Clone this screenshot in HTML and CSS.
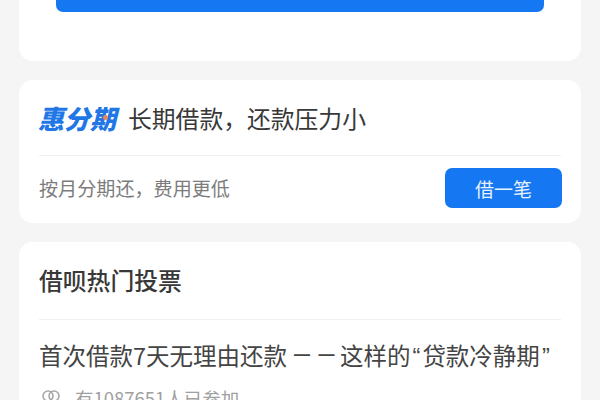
FILE: index.html
```html
<!DOCTYPE html>
<html lang="zh-CN">
<head>
    <meta charset="UTF-8">
    <title>借呗</title>
    <link rel="stylesheet" href="styles.css">
</head>
<body>
    <div class="card top-card">
        <div class="top-button"></div>
    </div>

    <div class="card loan-card">
        <div class="loan-head">
            <span class="logo">惠分期<i class="logo-dot"></i></span>
            <span class="loan-title">长期借款，还款压力小</span>
        </div>
        <div class="loan-foot">
            <span class="loan-sub">按月分期还，费用更低</span>
            <button class="borrow">借一笔</button>
        </div>
    </div>

    <div class="card vote-card">
        <div class="vote-head">借呗热门投票</div>
        <div class="vote-question">首次借款7天无理由还款<span class="dash">——</span>这样的<span class="quote">“</span>贷款冷静期<span class="quote">”</span></div>
        <div class="vote-meta">
            <svg class="people" width="20" height="20" viewBox="0 0 20 20" fill="none" stroke="#a8a8a8" stroke-width="1.6">
                <circle cx="7" cy="6" r="5"/>
                <circle cx="13" cy="6" r="5"/>
                <path d="M1 19c0-4 4-6 9-6s9 2 9 6"/>
            </svg>
            <span>有1087651人已参加</span>
        </div>
    </div>
</body>
</html>
```

FILE: styles.css
```css
html,
body {
    height: 400px;
    overflow: hidden;
}
body {
    margin: 0;
    padding: 0 19px;
    background-color: #f5f5f6;
    font-family: "Noto Sans CJK SC", "Liberation Sans", sans-serif;
    display: flex;
    flex-direction: column;
    gap: 19px;
}
.card {
    flex: none;
    background-color: #fff;
    border-radius: 14px;
    padding: 0 20px;
}
.top-card {
    height: 61px;
    border-radius: 0 0 14px 14px;
    padding: 0 37px;
}
.top-button {
    height: 12px;
    background-color: #1677f2;
    border-radius: 0 0 7px 7px;
}
.loan-card {
    height: 143px;
}
.loan-head {
    height: 75px;
    display: flex;
    align-items: center;
    gap: 12px;
    border-bottom: 1px solid #f0f0f0;
}
.logo {
    position: relative;
    margin-left: -1px;
    font-size: 26px;
    font-weight: 900;
    font-style: italic;
    color: #2277e6;
    width: 78px;
    white-space: nowrap;
}
.logo-dot {
    position: absolute;
    left: 65px;
    top: 16px;
    width: 5px;
    height: 5px;
    border-radius: 50%;
    background-color: #e8875a;
}
.loan-title {
    font-size: 23.800px;
    color: #383838;
}
.loan-foot {
    display: flex;
    align-items: center;
    justify-content: space-between;
    margin-top: 12px;
    margin-right: -1px;
}
.loan-sub {
    font-size: 19.100px;
    color: #7c7c7c;
}
.borrow {
    width: 117px;
    height: 40px;
    border: none;
    border-radius: 7px;
    background-color: #1677f2;
    color: #e8f2ff;
    font-family: inherit;
    font-size: 19px;
    padding: 0;
}
.vote-card {
    height: 200px;
}
.vote-head {
    height: 77px;
    line-height: 75px;
    font-size: 23.800px;
    font-weight: 500;
    color: #383838;
    border-bottom: 1px solid #f0f0f0;
}
.vote-question {
    margin-top: 17px;
    font-size: 23.500px;
    line-height: 36px;
    color: #444;
    white-space: nowrap;
}
.dash {
    font-family: "Liberation Sans", sans-serif;
    font-size: 16px;
    font-weight: 700;
    letter-spacing: 8.500px;
    vertical-align: 5px;
    margin-left: 7px;
    margin-right: -3px;
}
.quote {
    font-family: "Liberation Sans", sans-serif;
    padding: 0 2px;
}
.vote-meta {
    margin-top: 10px;
    display: flex;
    align-items: flex-start;
    gap: 14px;
    font-size: 18.500px;
    color: #a0a0a0;
}
.people {
    flex: none;
    margin: 5px 0 0 2px;
}
```
